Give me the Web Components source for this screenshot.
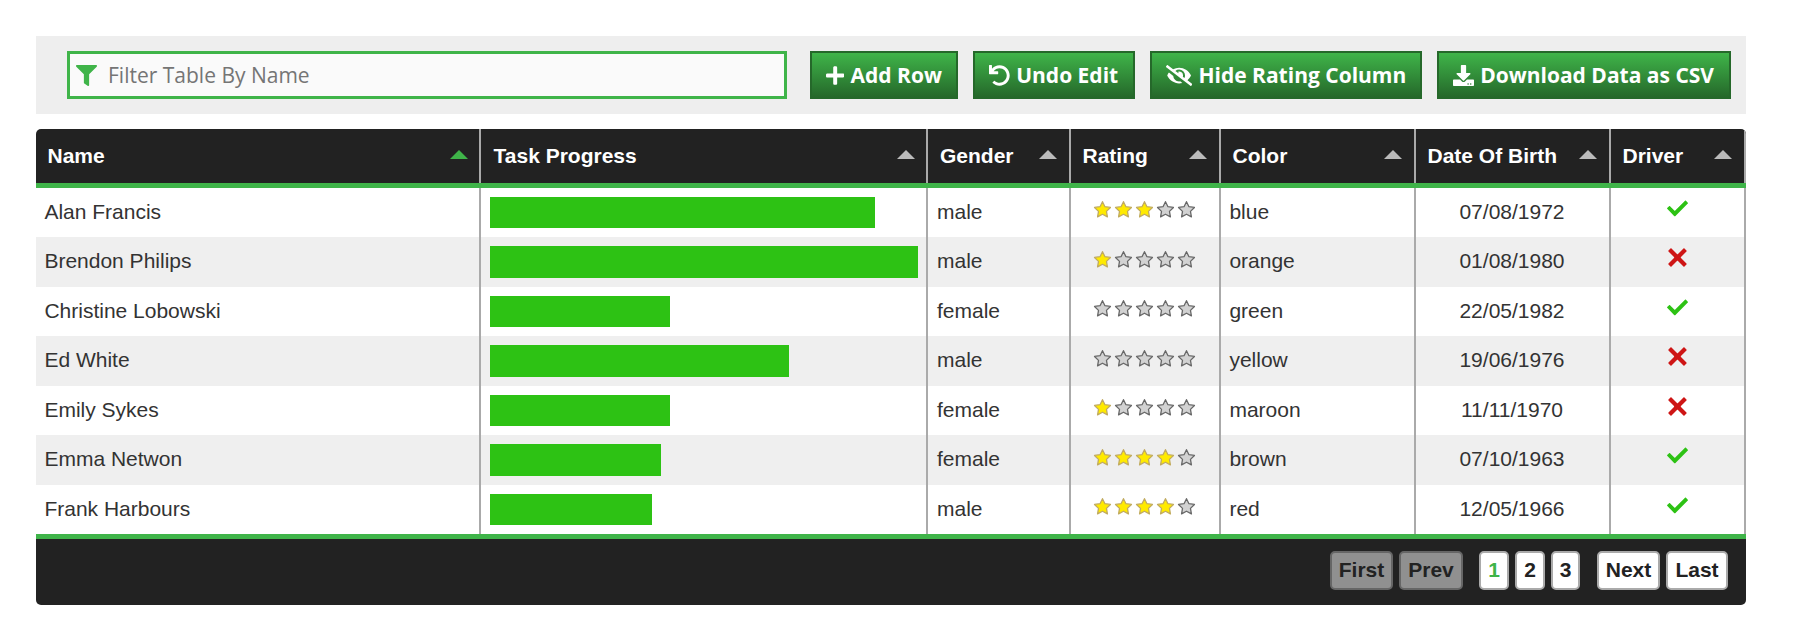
<!DOCTYPE html>
<html lang="en">
<head>
<meta charset="utf-8">
<title>People table</title>
<style>
  body { margin: 0; background: #fff; font-family: "Liberation Sans", Arial, sans-serif; font-size: 21px; color: #333; }
</style>
</head>
<body>
<demo-page></demo-page>
<script>
const ICONS = {
  filter: [512, "M487.976 0H24.028C2.71 0-8.047 25.866 7.058 40.971L192 225.941V432c0 7.831 3.821 15.17 10.237 19.662l80 55.98C298.02 518.69 320 507.493 320 487.98V225.941l184.947-184.97C520.021 25.896 509.338 0 487.976 0z"],
  plus: [448, "M416 208H272V64c0-17.67-14.33-32-32-32h-32c-17.67 0-32 14.33-32 32v144H32c-17.67 0-32 14.33-32 32v32c0 17.67 14.33 32 32 32h144v144c0 17.67 14.33 32 32 32h32c17.67 0 32-14.33 32-32V304h144c17.67 0 32-14.33 32-32v-32c0-17.67-14.33-32-32-32z"],
  undo: [512, "M212.333 224.333H12c-6.627 0-12-5.373-12-12V12C0 5.373 5.373 0 12 0h48c6.627 0 12 5.373 12 12v78.112C117.773 39.279 184.26 7.47 258.175 8.007c136.906.994 246.448 111.623 246.157 248.532C504.041 393.258 393.12 504 256.333 504c-64.089 0-122.496-24.313-166.51-64.215-5.099-4.622-5.334-12.554-.467-17.42l33.967-33.967c4.474-4.474 11.662-4.717 16.401-.525C170.76 415.336 211.58 432 256.333 432c97.268 0 176-78.716 176-176 0-97.267-78.716-176-176-176-58.496 0-110.28 28.476-142.274 72.333h98.274c6.627 0 12 5.373 12 12v48c0 6.627-5.373 12-12 12z"],
  eye: [640, "M320 400c-75.85 0-137.25-58.71-142.9-133.11L72.2 185.82c-13.79 17.3-26.48 35.59-36.72 55.59a32.35 32.35 0 0 0 0 29.19C89.71 376.41 197.07 448 320 448c26.91 0 52.87-4 77.89-10.46L346 397.39a144.13 144.13 0 0 1-26 2.61zm313.82 58.1l-110.55-85.44a331.25 331.25 0 0 0 81.25-102.07 32.35 32.35 0 0 0 0-29.19C550.29 135.59 442.93 64 320 64a308.15 308.15 0 0 0-147.32 37.7L45.46 3.37A16 16 0 0 0 23 6.18L3.37 31.45A16 16 0 0 0 6.18 53.9l588.36 454.73a16 16 0 0 0 22.46-2.81l19.64-25.27a16 16 0 0 0-2.82-22.45zm-183.72-142l-39.3-30.38A94.75 94.75 0 0 0 416 256a94.76 94.76 0 0 0-121.31-92.21A47.65 47.65 0 0 1 304 192a46.64 46.64 0 0 1-1.54 10l-73.61-56.89A142.31 142.31 0 0 1 320 112a143.92 143.92 0 0 1 144 144c0 21.63-5.29 41.79-13.9 60.11z"],
  download: [512, "M216 0h80c13.3 0 24 10.7 24 24v168h87.7c17.8 0 26.7 21.5 14.1 34.1L269.7 378.3c-7.5 7.5-19.8 7.5-27.3 0L90.1 226.1c-12.6-12.6-3.7-34.1 14.1-34.1H192V24c0-13.3 10.7-24 24-24zm296 376v112c0 13.3-10.7 24-24 24H24c-13.3 0-24-10.7-24-24V376c0-13.3 10.7-24 24-24h146.7l49 49c20.1 20.1 52.5 20.1 72.6 0l49-49H488c13.3 0 24 10.7 24 24zm-124 88c0-11-9-20-20-20s-20 9-20 20 9 20 20 20 20-9 20-20zm64 0c0-11-9-20-20-20s-20 9-20 20 9 20 20 20 20-9 20-20z"]
};
const TICK = "M21.652,3.211c-0.293-0.295-0.77-0.295-1.061,0L9.41,14.34c-0.293,0.297-0.771,0.297-1.062,0L3.449,9.351C3.304,9.203,3.114,9.13,2.923,9.129C2.73,9.128,2.534,9.201,2.387,9.351l-2.165,1.946C0.078,11.445,0,11.63,0,11.823c0,0.194,0.078,0.397,0.223,0.544l4.94,5.184c0.292,0.296,0.771,0.776,1.062,1.07l2.124,2.141c0.292,0.293,0.769,0.293,1.062,0l14.366-14.34c0.293-0.294,0.293-0.777,0-1.071L21.652,3.211z";
const CROSS = "M22.245,4.015c0.313,0.313,0.313,0.826,0,1.139l-6.276,6.27c-0.313,0.312-0.313,0.826,0,1.14l6.273,6.272c0.313,0.313,0.313,0.826,0,1.14l-2.285,2.277c-0.314,0.312-0.828,0.312-1.142,0l-6.271-6.271c-0.313-0.313-0.828-0.313-1.141,0l-6.276,6.267c-0.313,0.313-0.828,0.313-1.141,0l-2.282-2.28c-0.313-0.313-0.313-0.826,0-1.14l6.278-6.269c0.313-0.312,0.313-0.826,0-1.14L1.709,5.147c-0.314-0.313-0.314-0.827,0-1.14l2.284-2.278C4.308,1.417,4.821,1.417,5.135,1.73L11.405,8c0.314,0.314,0.828,0.314,1.141,0.001l6.276-6.267c0.312-0.312,0.826-0.312,1.141,0L22.245,4.015z";
const STAR = "259.216,29.942 330.27,173.919 489.16,197.007 374.185,309.08 401.33,467.31 259.216,392.612 117.104,467.31 144.25,309.08 29.274,197.007 188.165,173.919";

function define(name, render) {
  customElements.define(name, class extends HTMLElement {
    connectedCallback() {
      if (!this.shadowRoot) this.attachShadow({ mode: "open" }).innerHTML = render(this);
    }
  });
}

define("fa-icon", el => {
  const [w, d] = ICONS[el.getAttribute("name")];
  return `<style>:host{display:block;flex:none;height:21px;width:${w / 512 * 21}px}svg{display:block;width:100%;height:100%}</style>
  <svg viewBox="0 0 ${w} 512"><path fill="currentColor" d="${d}"/></svg>`;
});

define("filter-field", () => `<style>
  :host{display:flex;align-items:center;box-sizing:border-box;width:720px;height:48px;border:3px solid #3fb449;background:#fafafa;padding:0 0 0 6px;font-family:"Open Sans",sans-serif;color:#757575;margin-right:23px}
  fa-icon{color:#3fb449;margin-right:11px}
  span{line-height:29px}
  </style><fa-icon name="filter"></fa-icon><span><slot></slot></span>`);

define("tool-button", el => `<style>
  :host{display:flex;align-items:center;box-sizing:border-box;height:48px;width:${el.getAttribute("width")}px;border:2px solid #25682a;background:linear-gradient(to bottom,#3fb449 0%,#25682a 100%);padding-left:14px;color:#fff;font:bold 21px/29px "Open Sans",sans-serif;white-space:nowrap;margin-right:15px}
  fa-icon{margin-right:6.2px}
  </style><fa-icon name="${el.getAttribute("icon")}"></fa-icon><span><slot></slot></span>`);

define("tool-bar", () => `<style>
  :host{display:flex;align-items:center;box-sizing:border-box;width:1710px;height:78px;background:#eee;padding-left:31px;margin-bottom:15px}
  </style><slot></slot>`);

define("column-header", el => `<style>
  :host{display:flex;align-items:center;justify-content:space-between;box-sizing:border-box;height:100%;border-right:2px solid #aaa;padding:0 ${el.getAttribute("end") || 12}px 0 ${el.getAttribute("start") || 11.5}px;color:#fff;font-weight:bold;line-height:24px;white-space:nowrap}
  i{width:0;height:0;border:9px solid transparent;border-top:0;border-bottom:9px solid ${el.hasAttribute("sorted") ? "#3fb449" : "#bbb"};margin-top:-2px}
  </style><span><slot></slot></span><i></i>`);

define("table-cell", el => `<style>
  :host{display:flex;align-items:center;box-sizing:border-box;height:100%;border-right:2px solid #aaa;padding:0 8px .8px ${el.getAttribute("start") || 9}px;line-height:24px;white-space:nowrap}
  :host([center]){justify-content:center;padding:0 9px .8px 8px}
  :host([graphic]){padding-bottom:0}
  :host([bar]){padding:0 8.5px 0 9px}
  </style><slot></slot>`);

define("progress-bar", el => `<style>
  :host{display:block;height:31.5px;width:${el.getAttribute("value")}%;background:#2dc214}
  </style>`);

define("star-rating", el => `<style>
  :host{display:flex;margin-top:-5px}svg{display:block;width:21px;height:21px}
  </style>` + [1, 2, 3, 4, 5].map(n => {
    const on = n <= +el.getAttribute("value");
    return `<svg viewBox="-44 -48 607 607"><polygon points="${STAR}" fill="${on ? "#FFEA00" : "#D2D2D2"}" stroke="${on ? "#C1AB60" : "#686868"}" stroke-width="37.6152" stroke-linejoin="round"/></svg>`;
  }).join(""));

define("tick-cross", el => {
  const on = el.getAttribute("value") === "yes";
  return `<style>:host{display:block;margin-top:-7.5px}svg{display:block;width:21px;height:21px}</style>
  <svg viewBox="0 0 24 24"><path fill="${on ? "#2DC214" : "#CE1515"}" d="${on ? TICK : CROSS}"/></svg>`;
});

define("table-row", () => `<style>
  :host{display:grid;grid-template-columns:445px 447px 143px 150px 195px 195px 135px;height:49.5px;background:#fff}
  :host([even]){background:#efefef}
  :host([head]){height:58.5px;box-sizing:border-box;background:#222;border-bottom:5px solid #3fb449}
  </style><slot></slot>`);

define("page-button", el => `<style>
  :host{display:flex;align-items:center;justify-content:center;box-sizing:border-box;height:39px;width:${el.getAttribute("width")}px;margin-left:6px;border:2px solid #aaa;border-radius:5px;background:#fff;color:#222;font-weight:bold;line-height:24px;padding-bottom:2px}
  :host([disabled]){background:#909090;border-color:#666}
  :host([active]){color:#3fb449}
  </style><span><slot></slot></span>`);

define("page-bar", () => `<style>
  :host{display:flex;justify-content:flex-end;box-sizing:border-box;height:71px;border-top:5px solid #3fb449;background:#222;padding:12px 18px 0 0}
  .pages{display:flex;margin:0 11px 0 10px}
  </style>
  <page-button width="63" disabled>First</page-button><page-button width="64" disabled>Prev</page-button>
  <div class="pages"><page-button width="30" active>1</page-button><page-button width="30">2</page-button><page-button width="29">3</page-button></div>
  <page-button width="63">Next</page-button><page-button width="62">Last</page-button>`);

const ROWS = [
  ["Alan Francis", 90, "male", 3, "blue", "07/08/1972", "yes"],
  ["Brendon Philips", 100, "male", 1, "orange", "01/08/1980", "no"],
  ["Christine Lobowski", 42, "female", 0, "green", "22/05/1982", "yes"],
  ["Ed White", 70, "male", 0, "yellow", "19/06/1976", "no"],
  ["Emily Sykes", 42, "female", 1, "maroon", "11/11/1970", "no"],
  ["Emma Netwon", 40, "female", 4, "brown", "07/10/1963", "yes"],
  ["Frank Harbours", 38, "male", 4, "red", "12/05/1966", "yes"]
];

define("data-table", () => `<style>
  :host{display:block;width:1710px;height:476px;border-radius:5px;overflow:hidden}
  </style>
  <table-row head>
    <column-header sorted end="11">Name</column-header><column-header start="12.5" end="11">Task Progress</column-header><column-header start="12">Gender</column-header><column-header>Rating</column-header><column-header>Color</column-header><column-header>Date Of Birth</column-header><column-header>Driver</column-header>
  </table-row>` + ROWS.map(([name, pct, sex, stars, color, dob, drv], i) => `<table-row ${i % 2 ? "even" : ""}>
    <table-cell start="8.4">${name}</table-cell><table-cell bar><progress-bar value="${pct}"></progress-bar></table-cell><table-cell>${sex}</table-cell><table-cell center graphic><star-rating value="${stars}"></star-rating></table-cell><table-cell start="8.4">${color}</table-cell><table-cell center>${dob}</table-cell><table-cell center><tick-cross value="${drv}"></tick-cross></table-cell>
  </table-row>`).join("") + `<page-bar></page-bar>`);

define("demo-page", () => `<style>:host{display:block;padding:36px 0 0 36px;box-sizing:border-box;height:634px}</style>
  <tool-bar>
    <filter-field>Filter Table By Name</filter-field>
    <tool-button icon="plus" width="148">Add Row</tool-button>
    <tool-button icon="undo" width="162">Undo Edit</tool-button>
    <tool-button icon="eye" width="272">Hide Rating Column</tool-button>
    <tool-button icon="download" width="294">Download Data as CSV</tool-button>
  </tool-bar>
  <data-table></data-table>`);
</script>
</body>
</html>
